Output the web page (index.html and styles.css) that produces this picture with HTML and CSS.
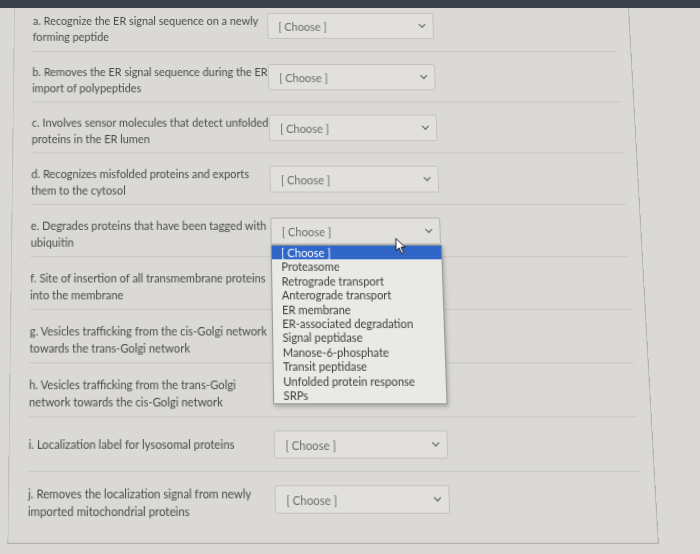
FILE: index.html
```html
<!DOCTYPE html>
<html>
<head>
  <title>Matching quiz</title>
  <meta charset="UTF-8">
  <link rel="stylesheet" href="styles.css">
</head>
<body>

  <div class="top-strip"></div>

  <!-- the screen is photographed at a slight angle, see transform on .quiz-panel -->
  <div class="quiz-panel">

    <div class="match-row first">
      <div class="question">a. Recognize the ER signal sequence on a newly forming peptide</div>
      <div class="answer-select"><span>[ Choose ]</span><span class="chevron"></span></div>
    </div>

    <div class="match-row">
      <div class="question">b. Removes the ER signal sequence during the ER import of polypeptides</div>
      <div class="answer-select"><span>[ Choose ]</span><span class="chevron"></span></div>
    </div>

    <div class="match-row">
      <div class="question">c. Involves sensor molecules that detect unfolded proteins in the ER lumen</div>
      <div class="answer-select"><span>[ Choose ]</span><span class="chevron"></span></div>
    </div>

    <div class="match-row">
      <div class="question">d. Recognizes misfolded proteins and exports them to the cytosol</div>
      <div class="answer-select"><span>[ Choose ]</span><span class="chevron"></span></div>
    </div>

    <div class="match-row">
      <div class="question">e. Degrades proteins that have been tagged with ubiquitin</div>
      <div class="select-wrap">
        <div class="answer-select open"><span>[ Choose ]</span><span class="chevron"></span></div>

        <!-- open option list -->
        <ul class="option-list">
          <li class="selected">[ Choose ]</li>
          <li>Proteasome</li>
          <li>Retrograde transport</li>
          <li>Anterograde transport</li>
          <li>ER membrane</li>
          <li>ER-associated degradation</li>
          <li>Signal peptidase</li>
          <li>Manose-6-phosphate</li>
          <li>Transit peptidase</li>
          <li>Unfolded protein response</li>
          <li>SRPs</li>
        </ul>

        <svg class="cursor" width="12" height="17" viewBox="0 0 12 17">
          <path d="M1 1 L1 13 L4 10 L6.5 15.5 L8.5 14.5 L6 9.5 L10 9.5 Z" fill="#fff" stroke="#222" stroke-width="1"/>
        </svg>
      </div>
    </div>

    <div class="match-row">
      <div class="question">f. Site of insertion of all transmembrane proteins into the membrane</div>
    </div>

    <div class="match-row">
      <div class="question">g. Vesicles trafficking from the cis-Golgi network towards the trans-Golgi network</div>
    </div>

    <div class="match-row">
      <div class="question">h. Vesicles trafficking from the trans-Golgi network towards the cis-Golgi network</div>
    </div>

    <div class="match-row">
      <div class="question single">i. Localization label for lysosomal proteins</div>
      <div class="answer-select"><span>[ Choose ]</span><span class="chevron"></span></div>
    </div>

    <div class="match-row last">
      <div class="question">j. Removes the localization signal from newly imported mitochondrial proteins</div>
      <div class="answer-select"><span>[ Choose ]</span><span class="chevron"></span></div>
    </div>

  </div>

</body>
</html>
```

FILE: styles.css
```css
html, body {
  margin: 0;
  height: 100%;
}

body {
  font-family: Lato, "Liberation Sans", sans-serif;
  background-color: #dad9d5;
  color: #4a4a4a;
  overflow: hidden;
}

.top-strip {
  position: relative;
  z-index: 5;
  height: 8px;
  background-color: #3c404a;
}

.quiz-panel {
  margin-left: 14px;
  width: 615px;
  height: 509px;
  box-sizing: border-box;
  border-left: 1px solid #c2c1bd;
  border-right: 1px solid #b3b2ae;
  border-bottom: 1px solid #b3b2ae;
  padding-left: 18px;
  padding-right: 13px;
  transform: perspective(1000px) rotateX(6.3deg);
  transform-origin: 111px 0;
}

.match-row {
  display: flex;
  align-items: flex-start;
  height: 50px;
  box-sizing: border-box;
  padding-top: 12px;
  border-bottom: 1px solid #c9c8c4;
}

.match-row.first {
  height: 44px;
  padding-top: 5px;
}

.match-row.last {
  border-bottom: none;
}

.question {
  width: 234px;
  font-size: 10.85px;
  line-height: 16px;
}

.question.single {
  padding-top: 5px;
}

.select-wrap {
  position: relative;
}

.answer-select {
  display: flex;
  align-items: center;
  justify-content: space-between;
  width: 166px;
  height: 26px;
  box-sizing: border-box;
  padding: 0 8px 0 10px;
  background-color: #e1e0dc;
  border: 1px solid #c4c3bf;
  border-radius: 2px;
  font-size: 10.85px;
  color: #6a6a6a;
}

.answer-select.open {
  border-color: #b4b3af;
}

.chevron {
  width: 4px;
  height: 4px;
  border-right: 1.5px solid #555;
  border-bottom: 1.5px solid #555;
  transform: rotate(45deg);
  margin-top: -3px;
}

.option-list {
  position: absolute;
  top: 26px;
  left: 0;
  width: 165px;
  margin: 0;
  padding: 0 0 1px 0;
  list-style: none;
  background-color: #e9e9e6;
  border: 1px solid #9a9996;
  box-shadow: 1px 2px 4px rgba(0, 0, 0, 0.25);
  font-size: 10.85px;
  line-height: 13.4px;
  color: #3c3c3c;
  z-index: 2;
}

.option-list li {
  padding-left: 9px;
}

.option-list li.selected {
  background-color: #2f66c8;
  color: #fff;
}

.cursor {
  position: absolute;
  top: 19px;
  left: 121px;
  z-index: 3;
}
```
